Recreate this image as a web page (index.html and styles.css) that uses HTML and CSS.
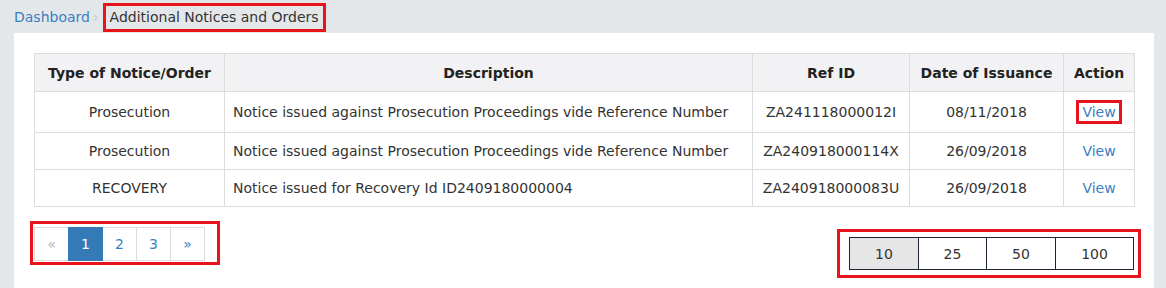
FILE: index.html
```html
<!DOCTYPE html>
<html>
<head>
<meta charset="utf-8">
<link rel="stylesheet" href="styles.css">
</head>
<body>
<div class="crumbs">
  <a class="crumb-link" href="#">Dashboard</a>
  <span class="crumb-sep">›</span>
  <span class="crumb-active">Additional Notices and Orders</span>
</div>
<div class="panel">
  <table class="notices">
    <colgroup>
      <col class="c1"><col class="c2"><col class="c3"><col class="c4"><col class="c5">
    </colgroup>
    <thead>
      <tr>
        <th>Type of Notice/Order</th>
        <th>Description</th>
        <th>Ref ID</th>
        <th>Date of Issuance</th>
        <th>Action</th>
      </tr>
    </thead>
    <tbody>
      <tr>
        <td>Prosecution</td>
        <td class="desc">Notice issued against Prosecution Proceedings vide Reference Number</td>
        <td>ZA241118000012I</td>
        <td>08/11/2018</td>
        <td><a class="view view-marked" href="#">View</a></td>
      </tr>
      <tr>
        <td>Prosecution</td>
        <td class="desc">Notice issued against Prosecution Proceedings vide Reference Number</td>
        <td>ZA240918000114X</td>
        <td>26/09/2018</td>
        <td><a class="view" href="#">View</a></td>
      </tr>
      <tr>
        <td>RECOVERY</td>
        <td class="desc">Notice issued for Recovery Id ID2409180000004</td>
        <td>ZA240918000083U</td>
        <td>26/09/2018</td>
        <td><a class="view" href="#">View</a></td>
      </tr>
    </tbody>
  </table>
  <div class="footer">
    <div class="mark mark-pager">
      <ul class="pager">
        <li class="pg disabled">«</li>
        <li class="pg active">1</li>
        <li class="pg">2</li>
        <li class="pg">3</li>
        <li class="pg">»</li>
      </ul>
    </div>
    <div class="mark mark-sizes">
      <div class="sizes">
        <span class="sz sz-a selected">10</span>
        <span class="sz sz-b">25</span>
        <span class="sz sz-a">50</span>
        <span class="sz sz-c">100</span>
      </div>
    </div>
  </div>
</div>
</body>
</html>
```
FILE: styles.css
```css
* { box-sizing: border-box; }
html, body { margin: 0; padding: 0; }
body {
  background: #e4e7ea;
  font-family: "DejaVu Sans", Verdana, sans-serif;
  font-size: 14px;
  color: #333;
  width: 1166px;
  height: 288px;
  overflow: hidden;
}
.crumbs {
  height: 33px;
  padding: 3px 0 0 14px;
  display: flex;
  align-items: flex-start;
  font-size: 14px;
}
.crumb-link {
  color: #3a7fc1;
  text-decoration: none;
  line-height: 23px;
  margin-top: 3px;
}
.crumb-sep {
  color: #c3c7cc;
  margin: 3px 4px 0 3px;
  line-height: 23px;
}
.crumb-active {
  border: 3px solid #e8141c;
  padding: 0 4px 0 4px;
  line-height: 23px;
  color: #333;
}
.panel {
  margin-left: 14px;
  width: 1140px;
  height: 260px;
  background: #fff;
  padding: 20px;
}
.notices {
  width: 1100px;
  border-collapse: collapse;
  table-layout: fixed;
}
.c1 { width: 190px; }
.c2 { width: 528px; }
.c3 { width: 157px; }
.c4 { width: 154px; }
.c5 { width: 71px; }
.notices th, .notices td {
  border: 1px solid #dcdcdc;
  padding: 8px 4px;
  line-height: 20px;
  text-align: center;
  white-space: nowrap;
}
.notices th {
  background: #f2f2f4;
  font-weight: bold;
  color: #222;
  padding: 9px 4px 8px;
}
.notices td.desc { text-align: left; padding-left: 8px; }
.view {
  color: #3a7fc1;
  text-decoration: none;
}
.view-marked {
  display: inline-block;
  border: 3px solid #e8141c;
  padding: 0 3px;
  line-height: 18px;
  vertical-align: middle;
}
.footer {
  display: flex;
  justify-content: space-between;
  align-items: flex-start;
  margin-top: 14px;
}
.mark { border: 3px solid #e8141c; }
.mark-pager {
  margin-left: -4px;
  padding: 3px 12px 1px 1px;
}
.pager {
  list-style: none;
  margin: 0;
  padding: 0;
  display: flex;
}
.pg {
  width: 35px;
  height: 34px;
  border: 1px solid #dcdcdc;
  margin-left: -1px;
  display: flex;
  align-items: center;
  justify-content: center;
  color: #3a7fc1;
  font-size: 14px;
}
.pg:first-child { margin-left: 0; }
.pg.disabled { color: #b5b5b5; }
.pg.active {
  background: #337ab7;
  border-color: #337ab7;
  color: #fff;
  position: relative;
}
.mark-sizes {
  margin-top: 8px;
  margin-right: -7px;
  padding: 5px 4px 5px 9px;
}
.sizes {
  display: flex;
  border: 1px solid #1c2433;
}
.sz {
  height: 31px;
  display: flex;
  align-items: center;
  justify-content: center;
  border-left: 1px solid #1c2433;
  color: #333;
  font-size: 14px;
}
.sz:first-child { border-left: 0; }
.sz-a { width: 69px; }
.sz-b { width: 68px; }
.sz-c { width: 78px; }
.sz.selected { background: #e6e6e6; width: 68px; }
```
